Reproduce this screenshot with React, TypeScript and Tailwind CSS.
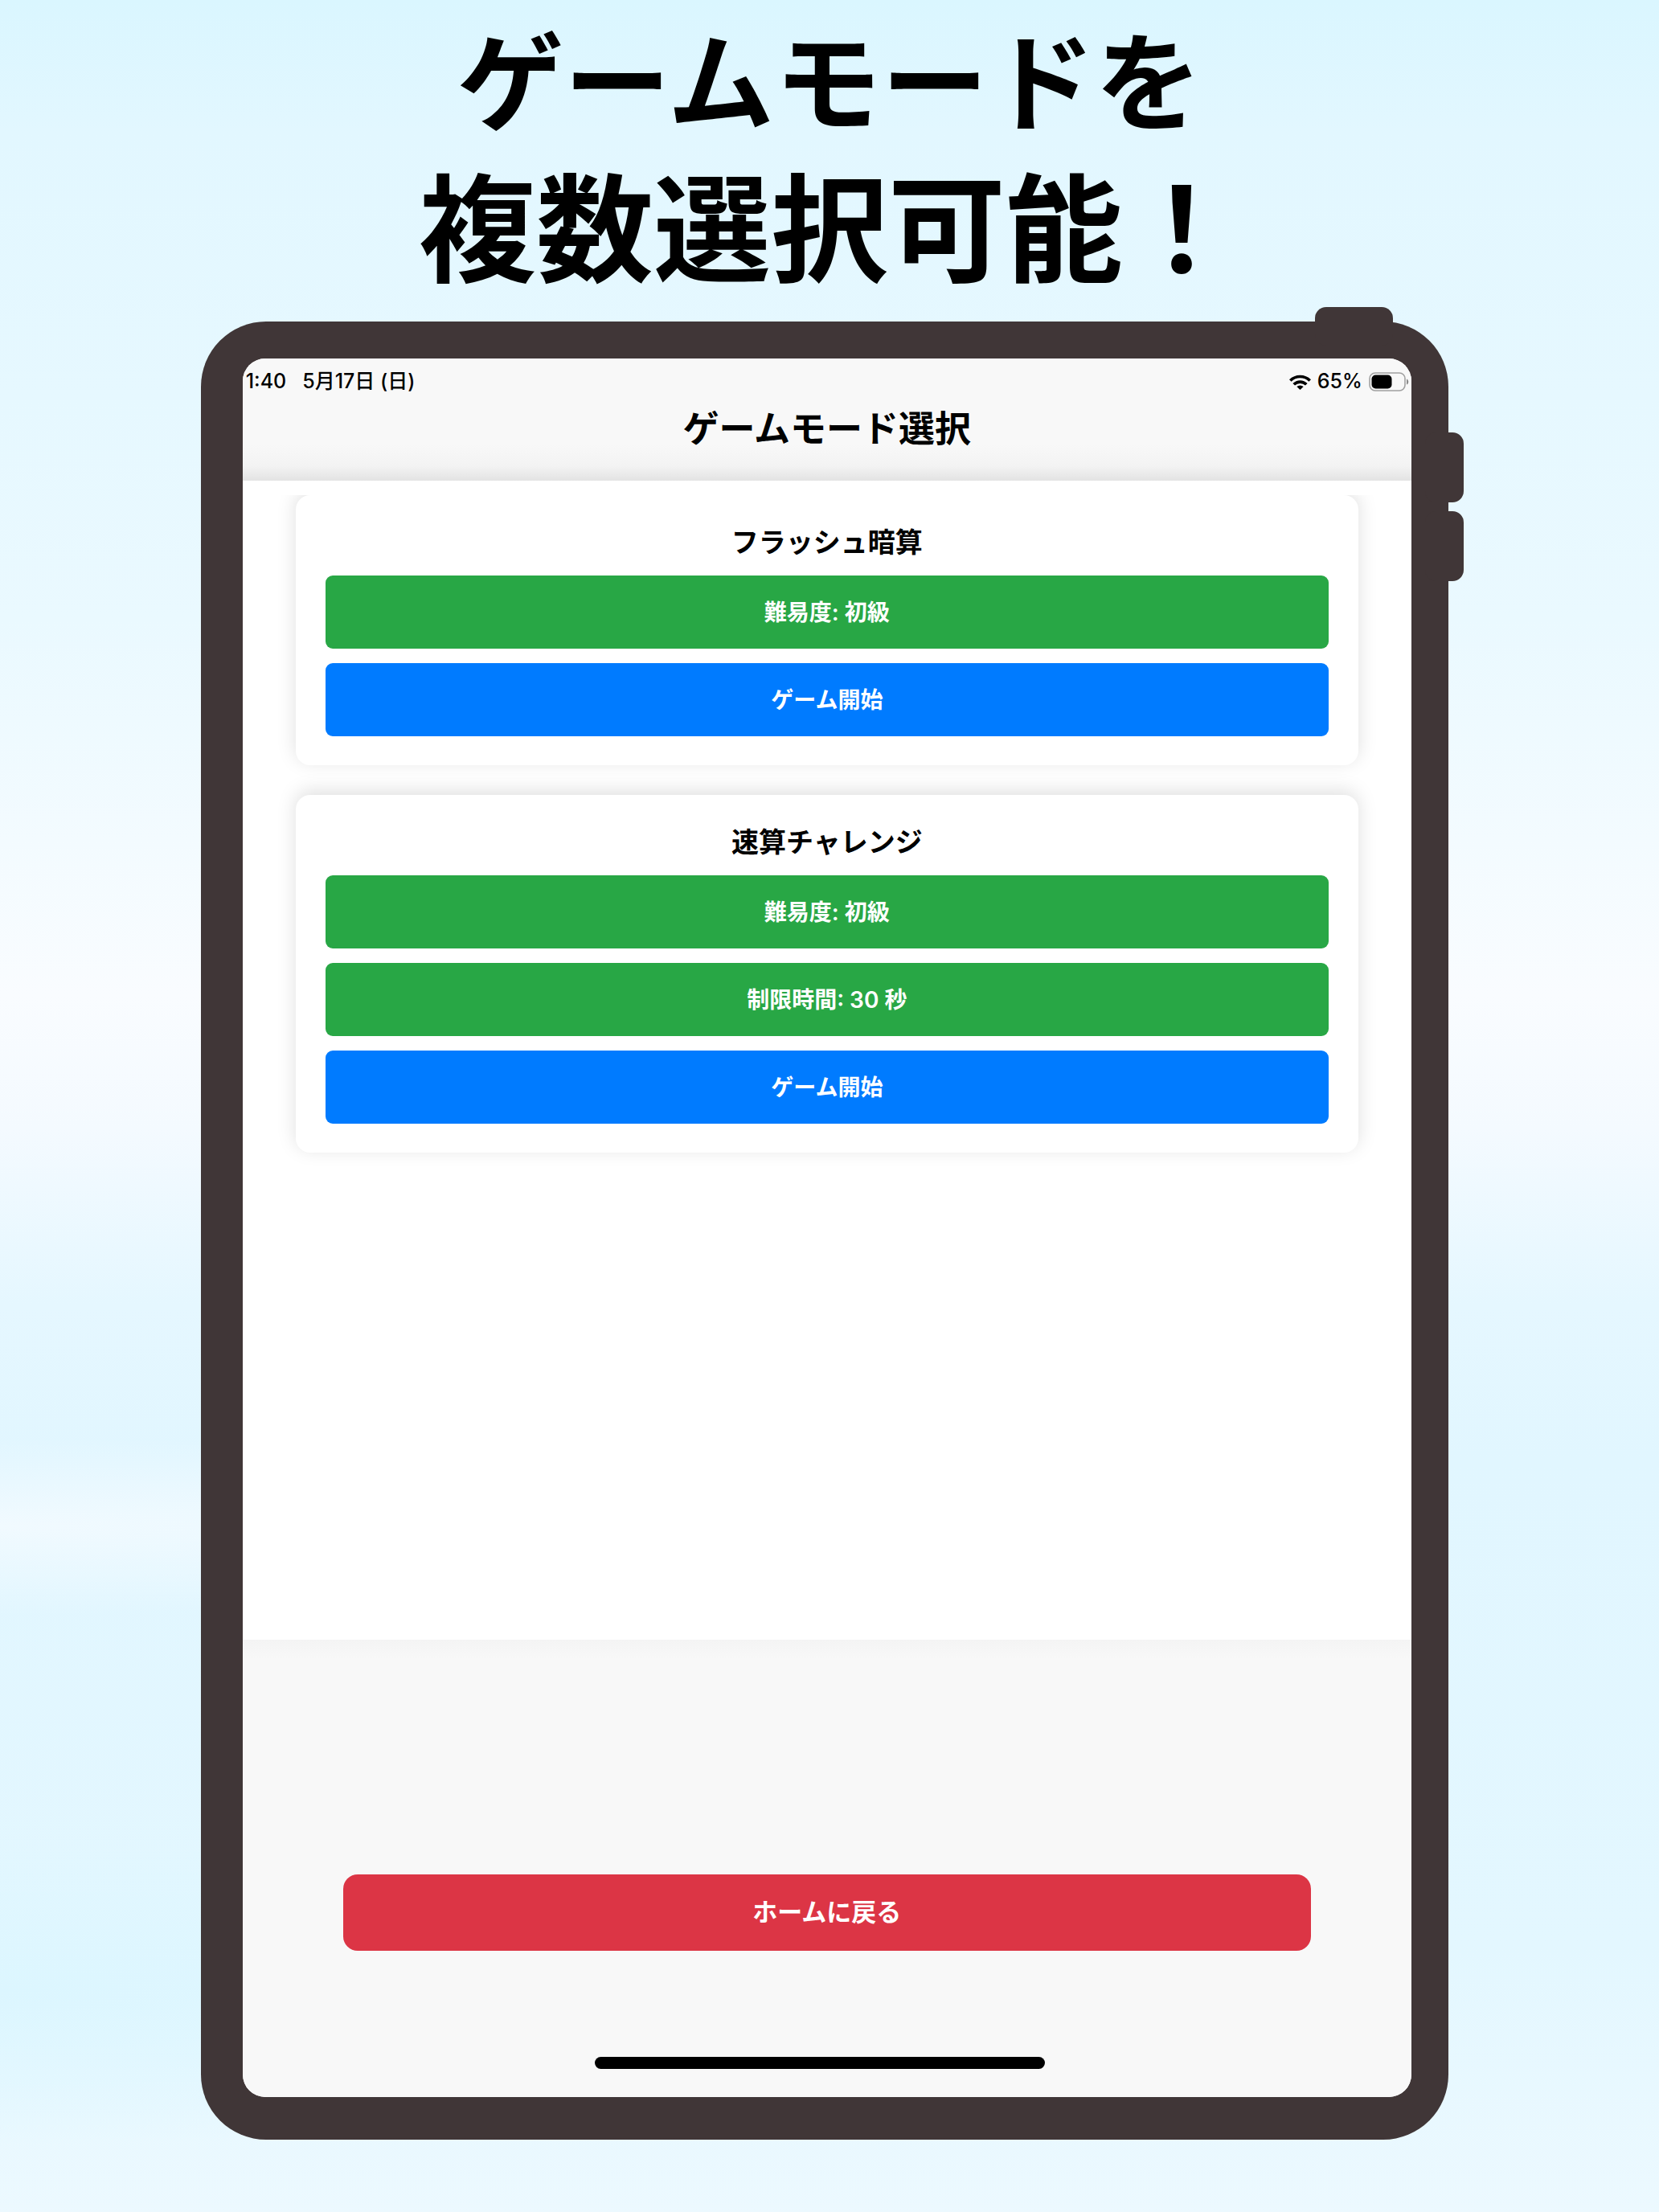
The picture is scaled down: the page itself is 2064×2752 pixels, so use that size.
type Action = { label: string; kind: 'option' | 'start' };

type Mode = { title: string; actions: Action[] };

const modes: Mode[] = [
  {
    title: 'フラッシュ暗算',
    actions: [
      { label: '難易度: 初級', kind: 'option' },
      { label: 'ゲーム開始', kind: 'start' },
    ],
  },
  {
    title: '速算チャレンジ',
    actions: [
      { label: '難易度: 初級', kind: 'option' },
      { label: '制限時間: 30 秒', kind: 'option' },
      { label: 'ゲーム開始', kind: 'start' },
    ],
  },
];

function WifiIcon() {
  return (
    <svg viewBox="0 0 27 19" className="h-[19px] w-[27px]" aria-hidden="true">
      <g fill="none" stroke="#000" strokeWidth="3.7">
        <path d="M1.3 7.5a17.4 17.4 0 0 1 24.4 0" />
        <path d="M5.7 12.3a11 11 0 0 1 15.6 0" />
      </g>
      <path d="M13.5 19 9.3 15.1a6 6 0 0 1 8.4 0z" />
    </svg>
  );
}

function BatteryIcon() {
  return (
    <svg viewBox="0 0 50 24" className="h-6 w-[50px]" aria-hidden="true">
      <rect x="1" y="1" width="44" height="22" rx="7" fill="none" stroke="#a0a0a0" strokeWidth="1.6" />
      <rect x="3.5" y="3.5" width="25" height="17" rx="5" />
      <path d="M47 8.5c3 1 3 6 0 7z" fill="#8a8a8a" />
    </svg>
  );
}

function StatusBar() {
  return (
    <div className="flex h-[58px] items-center justify-between pr-[3px] pl-1 text-[25px] font-medium">
      <div className="flex gap-5">
        <span>1:40</span>
        <span>5月17日 (日)</span>
      </div>
      <div className="flex items-center gap-2">
        <WifiIcon />
        <span>65%</span>
        <BatteryIcon />
      </div>
    </div>
  );
}

function ModeCard({ title, actions }: Mode) {
  return (
    <section className="flex flex-col gap-[18px] rounded-[18px] bg-white px-[37px] py-9 shadow-[0_-5px_24px_rgba(0,0,0,0.13)]">
      <h3 className="text-center text-[34px] leading-[46px] font-semibold">{title}</h3>
      {actions.map((action) => (
        <button
          key={action.label}
          type="button"
          className={`h-[91px] rounded-[9px] text-[28px] font-semibold text-white ${
            action.kind === 'start' ? 'bg-[#007bff]' : 'bg-[#28a745]'
          }`}
        >
          {action.label}
        </button>
      ))}
    </section>
  );
}

export default function App() {
  return (
    <div className="min-h-screen bg-[#e4f7ff] bg-[radial-gradient(60%_4%_at_0%_69%,#f1faff,transparent),radial-gradient(60%_7%_at_0%_90%,#dcf6ff,transparent),linear-gradient(180deg,#daf6ff_0%,#e2f7ff_6%,#e6f8ff_18%,#eaf9ff_28%,#f3fbff_38%,#f9fcff_45%,#f4faff_51%,#e5f7ff_59%,#e1f6ff_66%,#e3f7ff_88%,#ecf9ff_100%)] font-[Inter,'Noto_Sans_CJK_JP',sans-serif] text-black">
      <h1 className="pt-4 text-center font-bold">
        <span className="block text-[133px] leading-[175px]">ゲームモードを</span>
        <span className="block text-[146px] leading-[191px]">複数選択可能！</span>
      </h1>

      {/* Tablet */}
      <div className="relative mt-[18px] mr-[12.7%] ml-[12.1%] rounded-[81px] bg-[#403637] pt-[46px] pr-[46px] pb-[53px] pl-[52px]">
        <div className="absolute -top-[18px] right-[69px] h-12 w-[97px] rounded-[14px] bg-[#403637]" />
        <div className="absolute top-[138px] -right-[19px] h-[87px] w-12 rounded-[14px] bg-[#403637]" />
        <div className="absolute top-[236px] -right-[19px] h-[87px] w-12 rounded-[14px] bg-[#403637]" />

        <div className="relative overflow-hidden rounded-[28px] bg-white">
          <header className="h-[152px] bg-[linear-gradient(180deg,#f8f8f8_70%,#f3f3f3_88%,#e3e3e3_100%)]">
            <StatusBar />
            <h2 className="text-center text-[45px] leading-[60px] font-semibold">ゲームモード選択</h2>
          </header>

          <main className="mt-[18px] flex h-[1424px] flex-col gap-[37px] overflow-hidden px-[66px]">
            {modes.map((mode) => (
              <ModeCard key={mode.title} {...mode} />
            ))}
          </main>

          <footer className="flex h-[569px] flex-col items-center bg-[linear-gradient(180deg,#f4f4f4_0,#f8f8f8_24px)] px-[125px] pt-[292px]">
            <button
              type="button"
              className="h-[95px] w-full rounded-[18px] bg-[#dc3545] text-[31px] font-semibold text-white"
            >
              ホームに戻る
            </button>
            <div className="mt-[132px] mr-[18px] h-[15px] w-[560px] max-w-full rounded-full bg-black" />
          </footer>
        </div>
      </div>
    </div>
  );
}
